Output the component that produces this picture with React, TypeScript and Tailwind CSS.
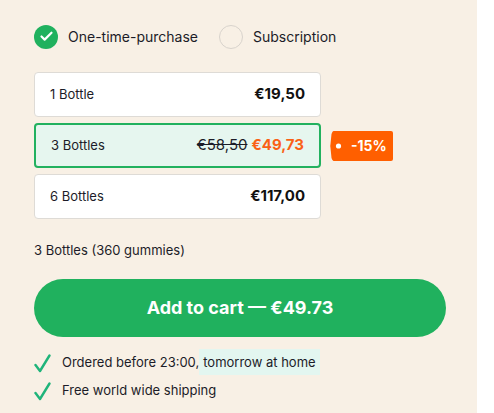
import { Check } from "lucide-react";

const options = [
  { label: "1 Bottle", price: "€19,50" },
  { label: "3 Bottles", price: "€49,73", old: "€58,50", selected: true },
  { label: "6 Bottles", price: "€117,00" },
];

function Tick() {
  return (
    <svg width="17" height="19" viewBox="0 0 17 19" className="shrink-0">
      <path
        d="M1.5 11 L6 17 L15.5 1.5"
        fill="none"
        stroke="#1fb47a"
        strokeWidth="2.4"
        strokeLinecap="round"
        strokeLinejoin="round"
      />
    </svg>
  );
}

export default function App() {
  return (
    <div className="flex">
      <div className="w-[477px] h-[413px] bg-[#f8f0e5] pl-[34px] pt-[24px] font-['Inter',sans-serif] text-[#1c1c28]">
        {/* Purchase type */}
        <div className="flex items-center h-[25px]">
          <div className="flex items-center gap-[10px]">
            <span className="w-[24px] h-[24px] rounded-full bg-[#20b15e] flex items-center justify-center">
              <Check size={15} strokeWidth={3.5} className="text-white" />
            </span>
            <span className="text-[14px]">One-time-purchase</span>
          </div>
          <div className="flex items-center gap-[10px] ml-[21px]">
            <span className="w-[24px] h-[24px] rounded-full bg-[#f8f0e5] border border-[#d8d3cc]" />
            <span className="text-[14px]">Subscription</span>
          </div>
        </div>

        {/* Bundles */}
        <div className="flex flex-col gap-[6px] mt-[23px]">
          {options.map((o) => (
            <div key={o.label} className="flex items-center">
              <div
                className={`w-[287px] h-[45px] rounded-[4px] flex items-center justify-between px-[15px] ${
                  o.selected
                    ? "bg-[#e6f6ef] border-2 border-[#22b15f]"
                    : "bg-white border border-[#dedbd6]"
                }`}
              >
                <span className="text-[13px]">{o.label}</span>
                <span className="flex items-center gap-[4px] text-[15px] font-bold">
                  {o.old && (
                    <span className="font-normal line-through">{o.old}</span>
                  )}
                  <span className={o.old ? "text-[#fa6116]" : "text-[#111]"}>
                    {o.price}
                  </span>
                </span>
              </div>
              {o.selected && (
                <div className="ml-[9px] flex items-center">
                  <svg width="13" height="30" viewBox="0 0 13 30" className="block">
                    <path d="M13 0 L3.5 0 Q2.5 0 1.5 3 L0.5 13 Q0 15 0.5 17 L1.5 27 Q2.5 30 3.5 30 L13 30 Z" fill="#ff5f00" />
                    <circle cx="8.5" cy="15" r="2.6" fill="white" />
                  </svg>
                  <span className="h-[30px] bg-[#ff5f00] rounded-r-[2px] pl-[8px] pr-[6px] flex items-center text-white text-[14px] font-bold">
                    -15%
                  </span>
                </div>
              )}
            </div>
          ))}
        </div>

        <p className="text-[13px] mt-[22px]">3 Bottles (360 gummies)</p>

        <button className="mt-[18px] w-[412px] h-[58px] rounded-full bg-[#20b15e] text-white text-[18px] font-bold flex items-center justify-center">
          Add to cart — €49.73
        </button>

        <ul className="mt-[14px] flex flex-col gap-[3px] text-[13px]">
          <li className="flex items-center gap-[11px] h-[25px]">
            <Tick />
            <span>
              Ordered before 23:00,
              <span className="bg-[#e3f6f0] pl-[4px] pr-[4px] py-[5px]">tomorrow at home</span>
            </span>
          </li>
          <li className="flex items-center gap-[11px] h-[25px]">
            <Tick />
            <span>Free world wide shipping</span>
          </li>
        </ul>
      </div>
    </div>
  );
}
